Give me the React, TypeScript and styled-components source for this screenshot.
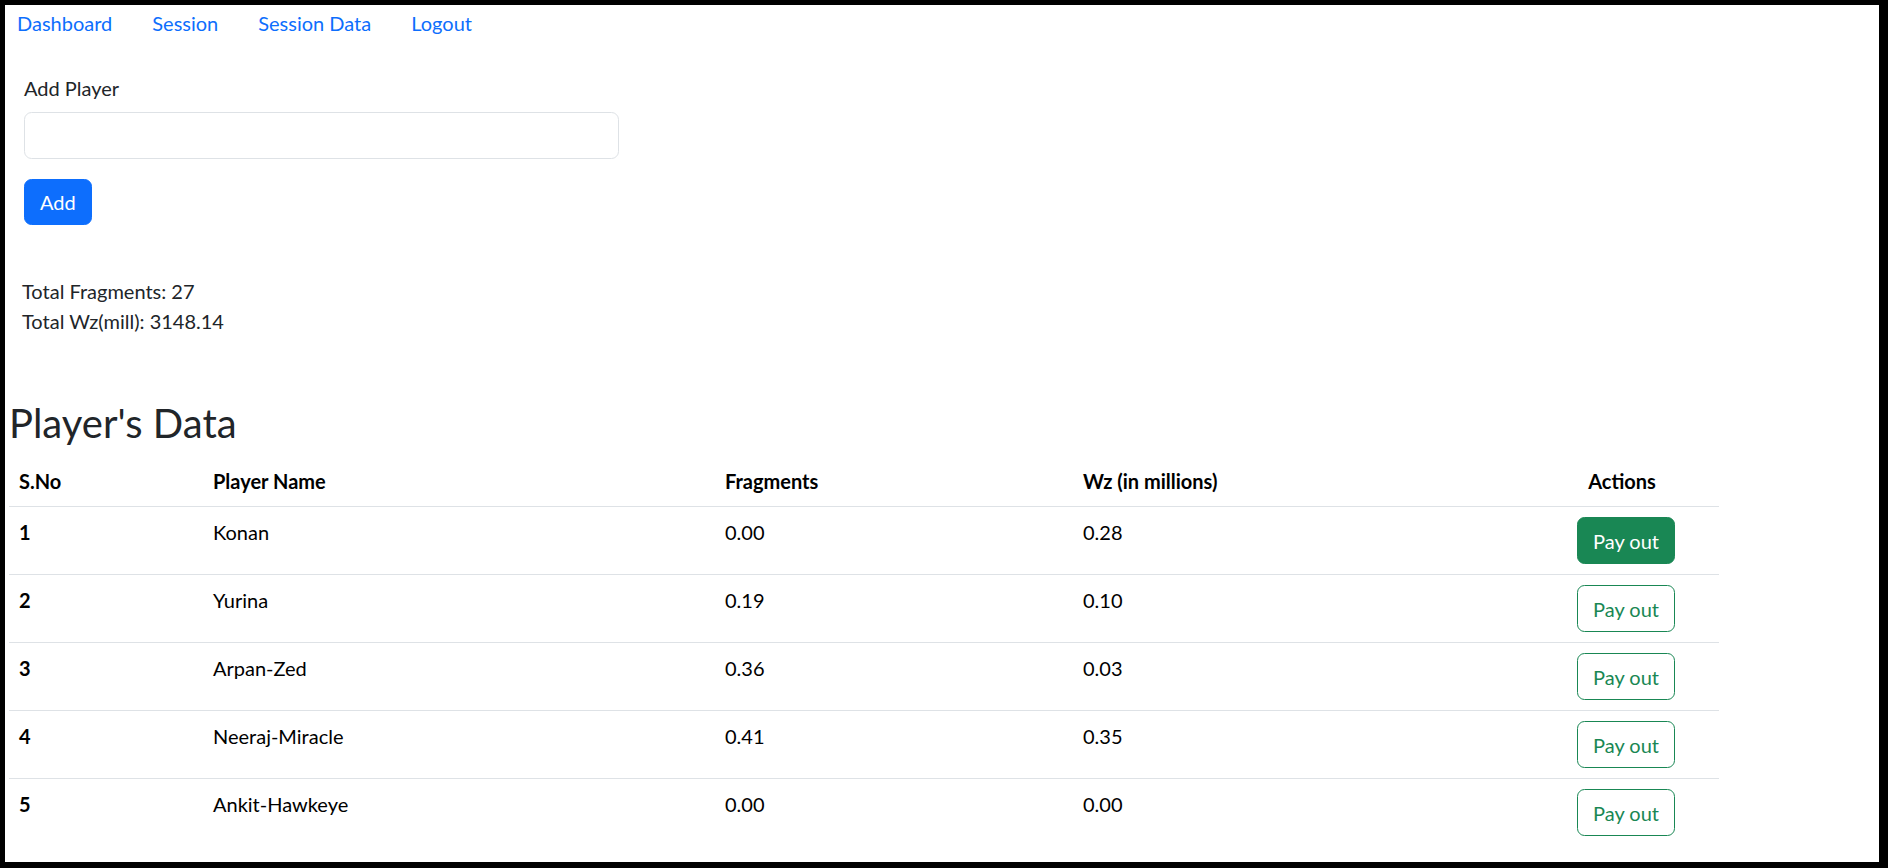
import React from "react";
import styled, { createGlobalStyle } from "styled-components";

const GlobalStyle = createGlobalStyle`
  html, body {
    margin: 0;
    padding: 0;
    background: #000;
  }
  body {
    font-family: Lato, "Open Sans", "Liberation Sans", sans-serif;
    font-size: 20px;
    line-height: 30px;
    color: #212529;
  }
  * { box-sizing: border-box; }
`;

const Frame = styled.div`
  margin: 5px 9px 6px 5px;
  height: 857px;
  background: #fff;
  overflow: hidden;
`;

const Nav = styled.nav`
  display: flex;
  gap: 40px;
  padding: 3px 0 0 12px;
`;

const NavLink = styled.a`
  color: #0d6efd;
  text-decoration: none;
  font-size: 20px;
  line-height: 30px;
  cursor: pointer;
`;

const Form = styled.div`
  display: flex;
  flex-direction: column;
  align-items: flex-start;
  padding: 35px 0 0 19px;
`;

const Label = styled.label`
  font-size: 20px;
  line-height: 30px;
  margin-bottom: 9px;
  color: #212529;
`;

const Input = styled.input`
  width: 595px;
  height: 46.5px;
  border: 1px solid #dee2e6;
  border-radius: 7.5px;
  padding: 7px 15px;
  font-family: inherit;
  font-size: 20px;
  outline: none;
  margin-bottom: 20px;
`;

const Button = styled.button<{ $variant: "primary" | "success" | "outline" }>`
  font-family: inherit;
  font-size: 20px;
  line-height: 30px;
  padding: ${(p) => (p.$variant === "primary" ? "7.3px 15px" : "7.5px 15px")};
  border-radius: 7.5px;
  border: 1px solid
    ${(p) => (p.$variant === "primary" ? "#0d6efd" : "#198754")};
  background: ${(p) =>
    p.$variant === "primary"
      ? "#0d6efd"
      : p.$variant === "success"
      ? "#198754"
      : "#fff"};
  color: ${(p) => (p.$variant === "outline" ? "#198754" : "#fff")};
  cursor: pointer;
`;

const Totals = styled.div`
  padding: 51px 0 0 17px;
  font-size: 20px;
  line-height: 30px;
  color: #212529;
`;

const Section = styled.section`
  padding: 63px 0 0 4px;
`;

const Heading = styled.h2`
  margin: 0 0 9px 0;
  font-size: 40px;
  line-height: 48px;
  font-weight: 400;
  color: #212529;
`;

const Table = styled.table`
  width: 1710px;
  border-collapse: collapse;
  table-layout: fixed;
  color: #000;
`;

const Th = styled.th<{ $center?: boolean }>`
  text-align: ${(p) => (p.$center ? "center" : "left")};
  font-weight: 700;
  padding: 10px;
  line-height: 30px;
  vertical-align: top;
  border-bottom: 1px solid #dee2e6;
`;

const Td = styled.td<{ $center?: boolean; $bold?: boolean }>`
  text-align: ${(p) => (p.$center ? "center" : "left")};
  font-weight: ${(p) => (p.$bold ? 700 : 400)};
  padding: ${(p) => (p.$center ? "10px 10px 10px 18px" : "10px")};
  line-height: 30px;
  vertical-align: top;
  border-bottom: 1px solid #dee2e6;
`;

const LastRow = styled.tr`
  & > td {
    border-bottom: none;
  }
`;

const players = [
  { name: "Konan", fragments: "0.00", wz: "0.28" },
  { name: "Yurina", fragments: "0.19", wz: "0.10" },
  { name: "Arpan-Zed", fragments: "0.36", wz: "0.03" },
  { name: "Neeraj-Miracle", fragments: "0.41", wz: "0.35" },
  { name: "Ankit-Hawkeye", fragments: "0.00", wz: "0.00" },
];

export default function App() {
  return (
    <>
      <GlobalStyle />
      <Frame>
        <Nav>
          <NavLink>Dashboard</NavLink>
          <NavLink>Session</NavLink>
          <NavLink>Session Data</NavLink>
          <NavLink>Logout</NavLink>
        </Nav>
        <Form>
          <Label>Add Player</Label>
          <Input type="text" />
          <Button $variant="primary">Add</Button>
        </Form>
        <Totals>
          <div>Total Fragments: 27</div>
          <div>Total Wz(mill): 3148.14</div>
        </Totals>
        <Section>
          <Heading>Player's Data</Heading>
          <Table>
            <colgroup>
              <col style={{ width: 194 }} />
              <col style={{ width: 512 }} />
              <col style={{ width: 358 }} />
              <col style={{ width: 452 }} />
              <col style={{ width: 194 }} />
            </colgroup>
            <thead>
              <tr>
                <Th>S.No</Th>
                <Th>Player Name</Th>
                <Th>Fragments</Th>
                <Th>Wz (in millions)</Th>
                <Th $center>Actions</Th>
              </tr>
            </thead>
            <tbody>
              {players.map((p, i) => {
                const cells = (
                  <>
                    <Td $bold>{i + 1}</Td>
                    <Td>{p.name}</Td>
                    <Td>{p.fragments}</Td>
                    <Td>{p.wz}</Td>
                    <Td $center>
                      <Button $variant={i === 0 ? "success" : "outline"}>
                        Pay out
                      </Button>
                    </Td>
                  </>
                );
                return i === players.length - 1 ? (
                  <LastRow key={i}>{cells}</LastRow>
                ) : (
                  <tr key={i}>{cells}</tr>
                );
              })}
            </tbody>
          </Table>
        </Section>
      </Frame>
    </>
  );
}
